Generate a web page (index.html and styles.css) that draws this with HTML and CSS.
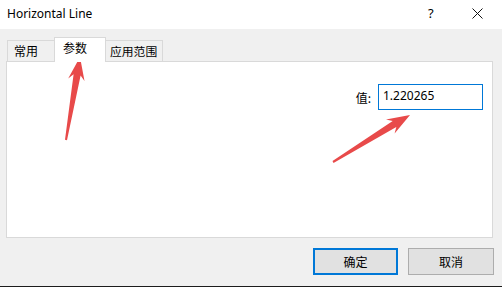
FILE: index.html
```html
<!DOCTYPE html>
<html lang="zh">
<head>
<meta charset="utf-8">
<title>Horizontal Line</title>
<link rel="stylesheet" href="styles.css">
</head>
<body>
<div class="window">
  <div class="titlebar">
    <span class="title">Horizontal Line</span>
    <span class="help">?</span>
    <span class="close"><svg width="11" height="11" viewBox="0 0 11 11"><path d="M0.5 0.5L10.5 10.5M10.5 0.5L0.5 10.5" stroke="#111" stroke-width="1" fill="none"/></svg></span>
  </div>
  <div class="main">
    <div class="tabs">
      <div class="tab">常用</div>
      <div class="tab active">参数</div>
      <div class="tab">应用范围</div>
    </div>
    <div class="panel">
      <div class="field">
        <label class="label">值:</label>
        <div class="input">1.220265</div>
      </div>
    </div>
    <div class="buttons">
      <div class="btn primary">确定</div>
      <div class="btn">取消</div>
    </div>
  </div>
  <div class="taskbar"></div>
  <svg class="overlay" width="502" height="287" viewBox="0 0 502 287">
    <polygon fill="#e84a4a" points="80,57 84.5,81 80.6,75.4 67,140.3 65,139.8 73.6,74.2 68.2,78.4"/>
    <polygon fill="#e84a4a" points="410,115 394.6,133.6 396.3,126.9 333.5,162.9 332.5,161.1 392.7,120.9 386,119.6"/>
  </svg>
</div>
</body>
</html>
```
FILE: styles.css
```css
html, body {
  margin: 0;
  padding: 0;
}
body {
  width: 502px;
  height: 287px;
  overflow: hidden;
  background: #f0f0f0;
  font-family: "Noto Sans", "Noto Sans CJK SC", sans-serif;
  color: #000;
}
.window {
  position: relative;
  width: 502px;
  height: 287px;
  display: flex;
  flex-direction: column;
}
.titlebar {
  height: 29px;
  background: #fff;
  display: flex;
  align-items: center;
  padding-left: 7px;
  flex: none;
}
.title {
  font-size: 12px;
  flex: 1;
  padding-bottom: 2px;
}
.help {
  font-size: 13px;
  width: 10px;
  margin-right: 34px;
  padding-bottom: 4px;
}
.close {
  display: flex;
  margin-right: 19px;
  padding-bottom: 3px;
}
.main {
  flex: 1;
  padding: 8px 9px 0 6px;
  display: flex;
  flex-direction: column;
}
.tabs {
  display: flex;
  align-items: flex-end;
  height: 24px;
  padding-left: 1px;
}
.tab {
  box-sizing: border-box;
  height: 21px;
  border: 1px solid #d9d9d9;
  border-bottom: none;
  background: #f0f0f0;
  font-family: "Noto Sans CJK SC", sans-serif;
  font-size: 12px;
  line-height: 19px;
  padding: 0 0 0 6px;
  margin-left: -1px;
  white-space: nowrap;
  overflow: hidden;
}
.tab:first-child {
  margin-left: 0;
  width: 48px;
}
.tab.active {
  height: 25px;
  background: #fff;
  margin-bottom: -1px;
  width: 52px;
  position: relative;
  z-index: 1;
  padding-left: 8px;
  line-height: 20px;
}
.tab:last-child {
  width: 58px;
  padding-left: 4px;
  font-size: 11.8px;
}
.panel {
  box-sizing: border-box;
  height: 177px;
  background: #fff;
  border: 1px solid #d9d9d9;
  padding: 22px 9px 0 0;
}
.field {
  display: flex;
  justify-content: flex-end;
  align-items: center;
}
.label {
  font-family: "Noto Sans CJK SC", sans-serif;
  font-size: 12px;
  margin-right: 7px;
}
.input {
  box-sizing: border-box;
  width: 105px;
  height: 26px;
  border: 1px solid #0078d7;
  font-size: 12px;
  line-height: 22px;
  padding-left: 4px;
}
.buttons {
  display: flex;
  justify-content: flex-end;
  gap: 10px;
  margin-top: 10px;
  margin-right: -1px;
}
.btn {
  box-sizing: border-box;
  width: 86px;
  height: 27px;
  border: 1px solid #adadad;
  background: #e1e1e1;
  font-family: "Noto Sans CJK SC", sans-serif;
  font-size: 12px;
  display: flex;
  align-items: center;
  justify-content: center;
}
.btn.primary {
  width: 85px;
  border: 2px solid #0078d7;
}
.taskbar {
  height: 1px;
  background: #1c1c1c;
  flex: none;
}
.overlay {
  position: absolute;
  left: 0;
  top: 0;
  pointer-events: none;
}
```
